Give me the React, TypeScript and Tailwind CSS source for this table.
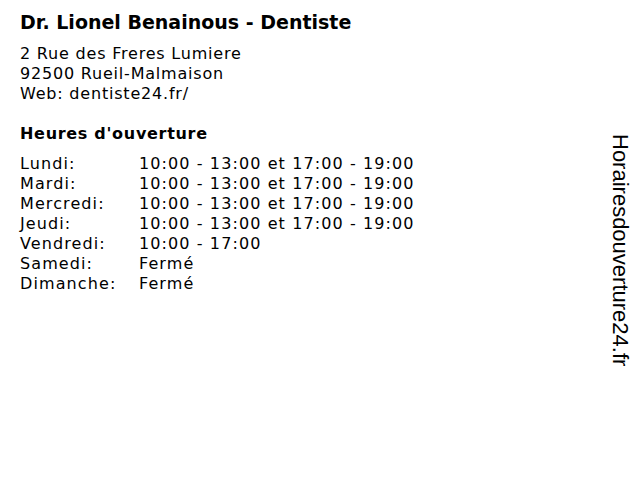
import React from "react";

const hours: [string, string][] = [
  ["Lundi:", "10:00 - 13:00 et 17:00 - 19:00"],
  ["Mardi:", "10:00 - 13:00 et 17:00 - 19:00"],
  ["Mercredi:", "10:00 - 13:00 et 17:00 - 19:00"],
  ["Jeudi:", "10:00 - 13:00 et 17:00 - 19:00"],
  ["Vendredi:", "10:00 - 17:00"],
  ["Samedi:", "Fermé"],
  ["Dimanche:", "Fermé"],
];

const App: React.FC = () => {
  return (
    <div className="flex w-[640px] h-[480px] bg-white text-black font-['DejaVu_Sans',sans-serif]">
      {/* Main info */}
      <div className="flex-1 pl-5 pt-[9px]">
        <h1 className="text-[19px] leading-[26px] font-bold">
          Dr. Lionel Benainous - Dentiste
        </h1>
        <div className="mt-[9px] text-base leading-5 tracking-[0.8px]">
          <div>2 Rue des Freres Lumiere</div>
          <div>92500 Rueil-Malmaison</div>
          <div>Web: dentiste24.fr/</div>
        </div>

        <h2 className="mt-[20px] text-base leading-5 font-bold tracking-[0.7px]">
          Heures d'ouverture
        </h2>
        <div className="mt-[10px] text-base leading-5 tracking-[1.1px]">
          {hours.map(([day, time]) => (
            <div key={day} className="flex">
              <span className="w-[119px] shrink-0">{day}</span>
              <span>{time}</span>
            </div>
          ))}
        </div>
      </div>

      {/* Site watermark */}
      <div className="w-[40px] pt-[134px] flex justify-center">
        <span className="[writing-mode:vertical-rl] text-[22px] leading-6 font-['Liberation_Sans',sans-serif]">
          Horairesdouverture24.fr
        </span>
      </div>
    </div>
  );
};

export default App;
